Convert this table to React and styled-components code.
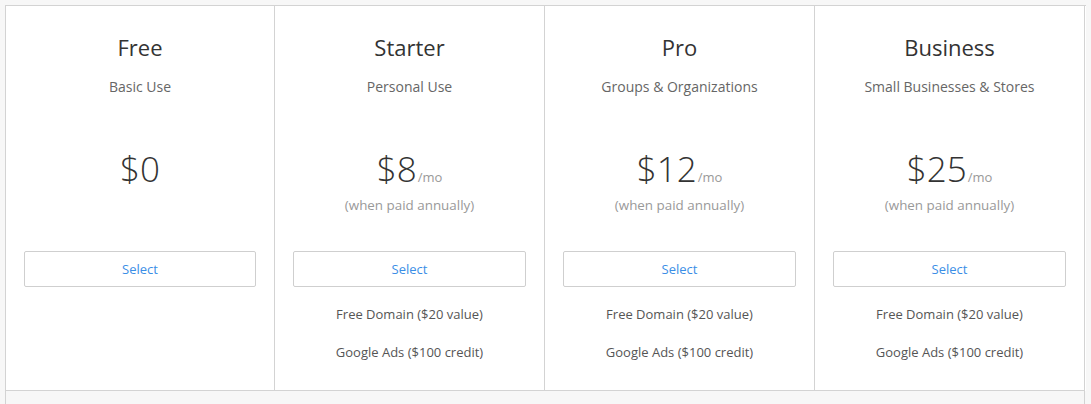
import React from "react";
import styled, { createGlobalStyle } from "styled-components";

const plans = [
  { name: "Free", use: "Basic Use", price: "$0", features: [] },
  {
    name: "Starter",
    use: "Personal Use",
    price: "$8",
    monthly: true,
    features: ["Free Domain ($20 value)", "Google Ads ($100 credit)"],
  },
  {
    name: "Pro",
    use: "Groups & Organizations",
    price: "$12",
    monthly: true,
    features: ["Free Domain ($20 value)", "Google Ads ($100 credit)"],
  },
  {
    name: "Business",
    use: "Small Businesses & Stores",
    price: "$25",
    monthly: true,
    features: ["Free Domain ($20 value)", "Google Ads ($100 credit)"],
  },
];

const GlobalStyle = createGlobalStyle`
  html, body {
    margin: 0;
    background: #f7f7f7;
  }
  body {
    font-family: "Open Sans", "Liberation Sans", sans-serif;
  }
`;

const Page = styled.div`
  padding: 5px 0 0 5px;
  height: 404px;
  box-sizing: border-box;
  overflow: hidden;
`;

const Table = styled.div`
  display: grid;
  grid-template-columns: 269px repeat(3, 270px);
  width: 1080px;
  border-top: 1px solid #d3d3d3;
  border-left: 1px solid #d3d3d3;
  background: #fff;
`;

const Column = styled.div`
  display: flex;
  flex-direction: column;
  align-items: center;
  height: 385px;
  box-sizing: border-box;
  padding: 28px 18px 0;
  border-right: 1px solid #d3d3d3;
  border-bottom: 1px solid #d3d3d3;
`;

const Title = styled.h2`
  margin: 0;
  font-size: 22px;
  line-height: 26px;
  font-weight: 400;
  color: #333;
`;

const Use = styled.div`
  margin-top: 18px;
  font-size: 14px;
  line-height: 18px;
  color: #666;
`;

const PriceBlock = styled.div`
  height: 104px;
  margin-top: 51px;
  display: flex;
  flex-direction: column;
  align-items: center;
`;

const Price = styled.div`
  font-size: 35px;
  font-weight: 300;
  line-height: 44px;
  color: #333;
  display: flex;
  align-items: baseline;
`;

const Per = styled.span`
  font-size: 13px;
  font-weight: 400;
  color: #999;
  margin-left: 1px;
`;

const Note = styled.div`
  margin-top: -3px;
  font-size: 13.4px;
  line-height: 18px;
  color: #999;
`;

const SelectButton = styled.button`
  width: 100%;
  height: 36px;
  border: 1px solid #cfcfcf;
  border-radius: 2px;
  background: #fff;
  color: #3b8ee6;
  font-family: inherit;
  font-size: 13px;
  cursor: pointer;
`;

const Features = styled.ul`
  list-style: none;
  margin: 18px 0 0;
  padding: 0;
  display: flex;
  flex-direction: column;
  gap: 20px;
  align-items: center;
`;

const Feature = styled.li`
  font-size: 13px;
  line-height: 18px;
  color: #555;
`;

const Footer = styled.div`
  width: 1080px;
  box-sizing: border-box;
  height: 40px;
  border-left: 1px solid #d3d3d3;
  border-right: 1px solid #d3d3d3;
  background: #f7f7f7;
`;

export default function App() {
  return (
    <Page>
      <GlobalStyle />
      <Table>
        {plans.map((plan) => (
          <Column key={plan.name}>
            <Title>{plan.name}</Title>
            <Use>{plan.use}</Use>
            <PriceBlock>
              <Price>
                {plan.price}
                {plan.monthly && <Per>/mo</Per>}
              </Price>
              {plan.monthly && <Note>(when paid annually)</Note>}
            </PriceBlock>
            <SelectButton>Select</SelectButton>
            {plan.features.length > 0 && (
              <Features>
                {plan.features.map((f) => (
                  <Feature key={f}>{f}</Feature>
                ))}
              </Features>
            )}
          </Column>
        ))}
      </Table>
      <Footer />
    </Page>
  );
}
